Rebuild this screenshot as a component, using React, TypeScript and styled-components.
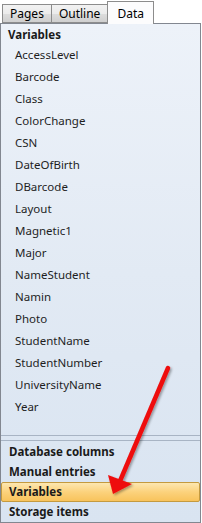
import React from 'react';
import styled, { createGlobalStyle } from 'styled-components';

const VARIABLES = [
  'AccessLevel',
  'Barcode',
  'Class',
  'ColorChange',
  'CSN',
  'DateOfBirth',
  'DBarcode',
  'Layout',
  'Magnetic1',
  'Major',
  'NameStudent',
  'Namin',
  'Photo',
  'StudentName',
  'StudentNumber',
  'UniversityName',
  'Year',
];

const TABS = ['Pages', 'Outline', 'Data'];
const SECTIONS = ['Database columns', 'Manual entries', 'Variables', 'Storage items'];

const GlobalStyle = createGlobalStyle`
  html, body {
    margin: 0;
    padding: 0;
    background: #ffffff;
  }
  body {
    font-family: 'Noto Sans', 'Open Sans', sans-serif;
    font-size: 11.5px;
    color: #1e1e1e;
  }
`;

function App() {
  return (
    <>
      <GlobalStyle />
      <Frame>
        <TabStrip>
          {TABS.map((tab) => (
            <Tab key={tab} active={tab === 'Data'}>
              {tab}
            </Tab>
          ))}
        </TabStrip>
        <Panel>
          <ListArea>
            <Heading>Variables</Heading>
            {VARIABLES.map((name) => (
              <Item key={name}>{name}</Item>
            ))}
          </ListArea>
          <Splitter />
          <SectionList>
            {SECTIONS.map((s) => (
              <Section key={s} selected={s === 'Variables'}>
                {s}
              </Section>
            ))}
          </SectionList>
        </Panel>
        <Arrow width="202" height="523" viewBox="0 0 202 523">
          <defs>
            <filter id="sh" x="-20%" y="-20%" width="140%" height="140%">
              <feDropShadow dx="1.5" dy="1.5" stdDeviation="1.2" floodColor="#000" floodOpacity="0.35" />
            </filter>
          </defs>
          <g filter="url(#sh)">
            <line x1="168" y1="368" x2="120" y2="481" stroke="#ee0d0d" strokeWidth="4.5" strokeLinecap="round" />
            <polygon points="108,475 132,484 113,494" fill="#ee0d0d" />
          </g>
        </Arrow>
      </Frame>
    </>
  );
}

const Frame = styled.div`
  position: relative;
  width: 202px;
  height: 523px;
  display: flex;
  flex-direction: column;
  background: #ffffff;
  overflow: hidden;
`;

const TabStrip = styled.div`
  height: 23px;
  display: flex;
  align-items: flex-end;
  padding-left: 2px;
  position: relative;
  z-index: 1;
`;

const Tab = styled.div<{ active: boolean }>`
  box-sizing: border-box;
  height: ${({ active }) => (active ? 23 : 19)}px;
  margin-bottom: ${({ active }) => (active ? -1 : 0)}px;
  padding: ${({ active }) => (active ? '0 9px' : '0 7px')};
  display: flex;
  align-items: center;
  border: 1px solid #8c8c8c;
  border-bottom: ${({ active }) => (active ? 'none' : '1px solid #8c8c8c')};
  margin-left: -1px;
  background: ${({ active }) =>
    active
      ? '#fcfcfd'
      : 'linear-gradient(to bottom, #f2f2f2 0%, #ebebeb 50%, #dddddd 51%, #cfcfcf 100%)'};
  color: #000;
  font-size: 12px;
  &:first-child {
    margin-left: 0;
  }
`;

const Panel = styled.div`
  flex: 1;
  box-sizing: border-box;
  margin-right: 1px;
  border: 1px solid #828790;
  display: flex;
  flex-direction: column;
  background: linear-gradient(to bottom, #edf2f9 0%, #e2eaf4 50%, #d9e4f1 100%);
`;

const ListArea = styled.div`
  flex: 1;
  padding: 2px 0 0 7px;
`;

const Heading = styled.div`
  font-weight: bold;
  height: 18px;
  line-height: 18px;
  color: #1a1a1a;
`;

const Item = styled.div`
  height: 22px;
  line-height: 22px;
  padding-left: 7px;
`;

const Splitter = styled.div`
  height: 4px;
  border-top: 1px solid #a8b4c4;
  border-bottom: 1px solid #a8b4c4;
`;

const SectionList = styled.div`
  padding: 1px 0 0 0;
  display: flex;
  flex-direction: column;
`;

const Section = styled.div<{ selected: boolean }>`
  height: 20px;
  line-height: 18px;
  box-sizing: border-box;
  padding-left: 7px;
  font-weight: bold;
  color: #1a1a1a;
  border: 1px solid ${({ selected }) => (selected ? '#c49a3f' : 'transparent')};
  border-radius: 2px;
  background: ${({ selected }) =>
    selected
      ? 'linear-gradient(to bottom, #fde7b0 0%, #fcd27c 50%, #f8c35c 100%)'
      : 'transparent'};
`;

const Arrow = styled.svg`
  position: absolute;
  left: 0;
  top: 0;
  pointer-events: none;
`;

export default App;
